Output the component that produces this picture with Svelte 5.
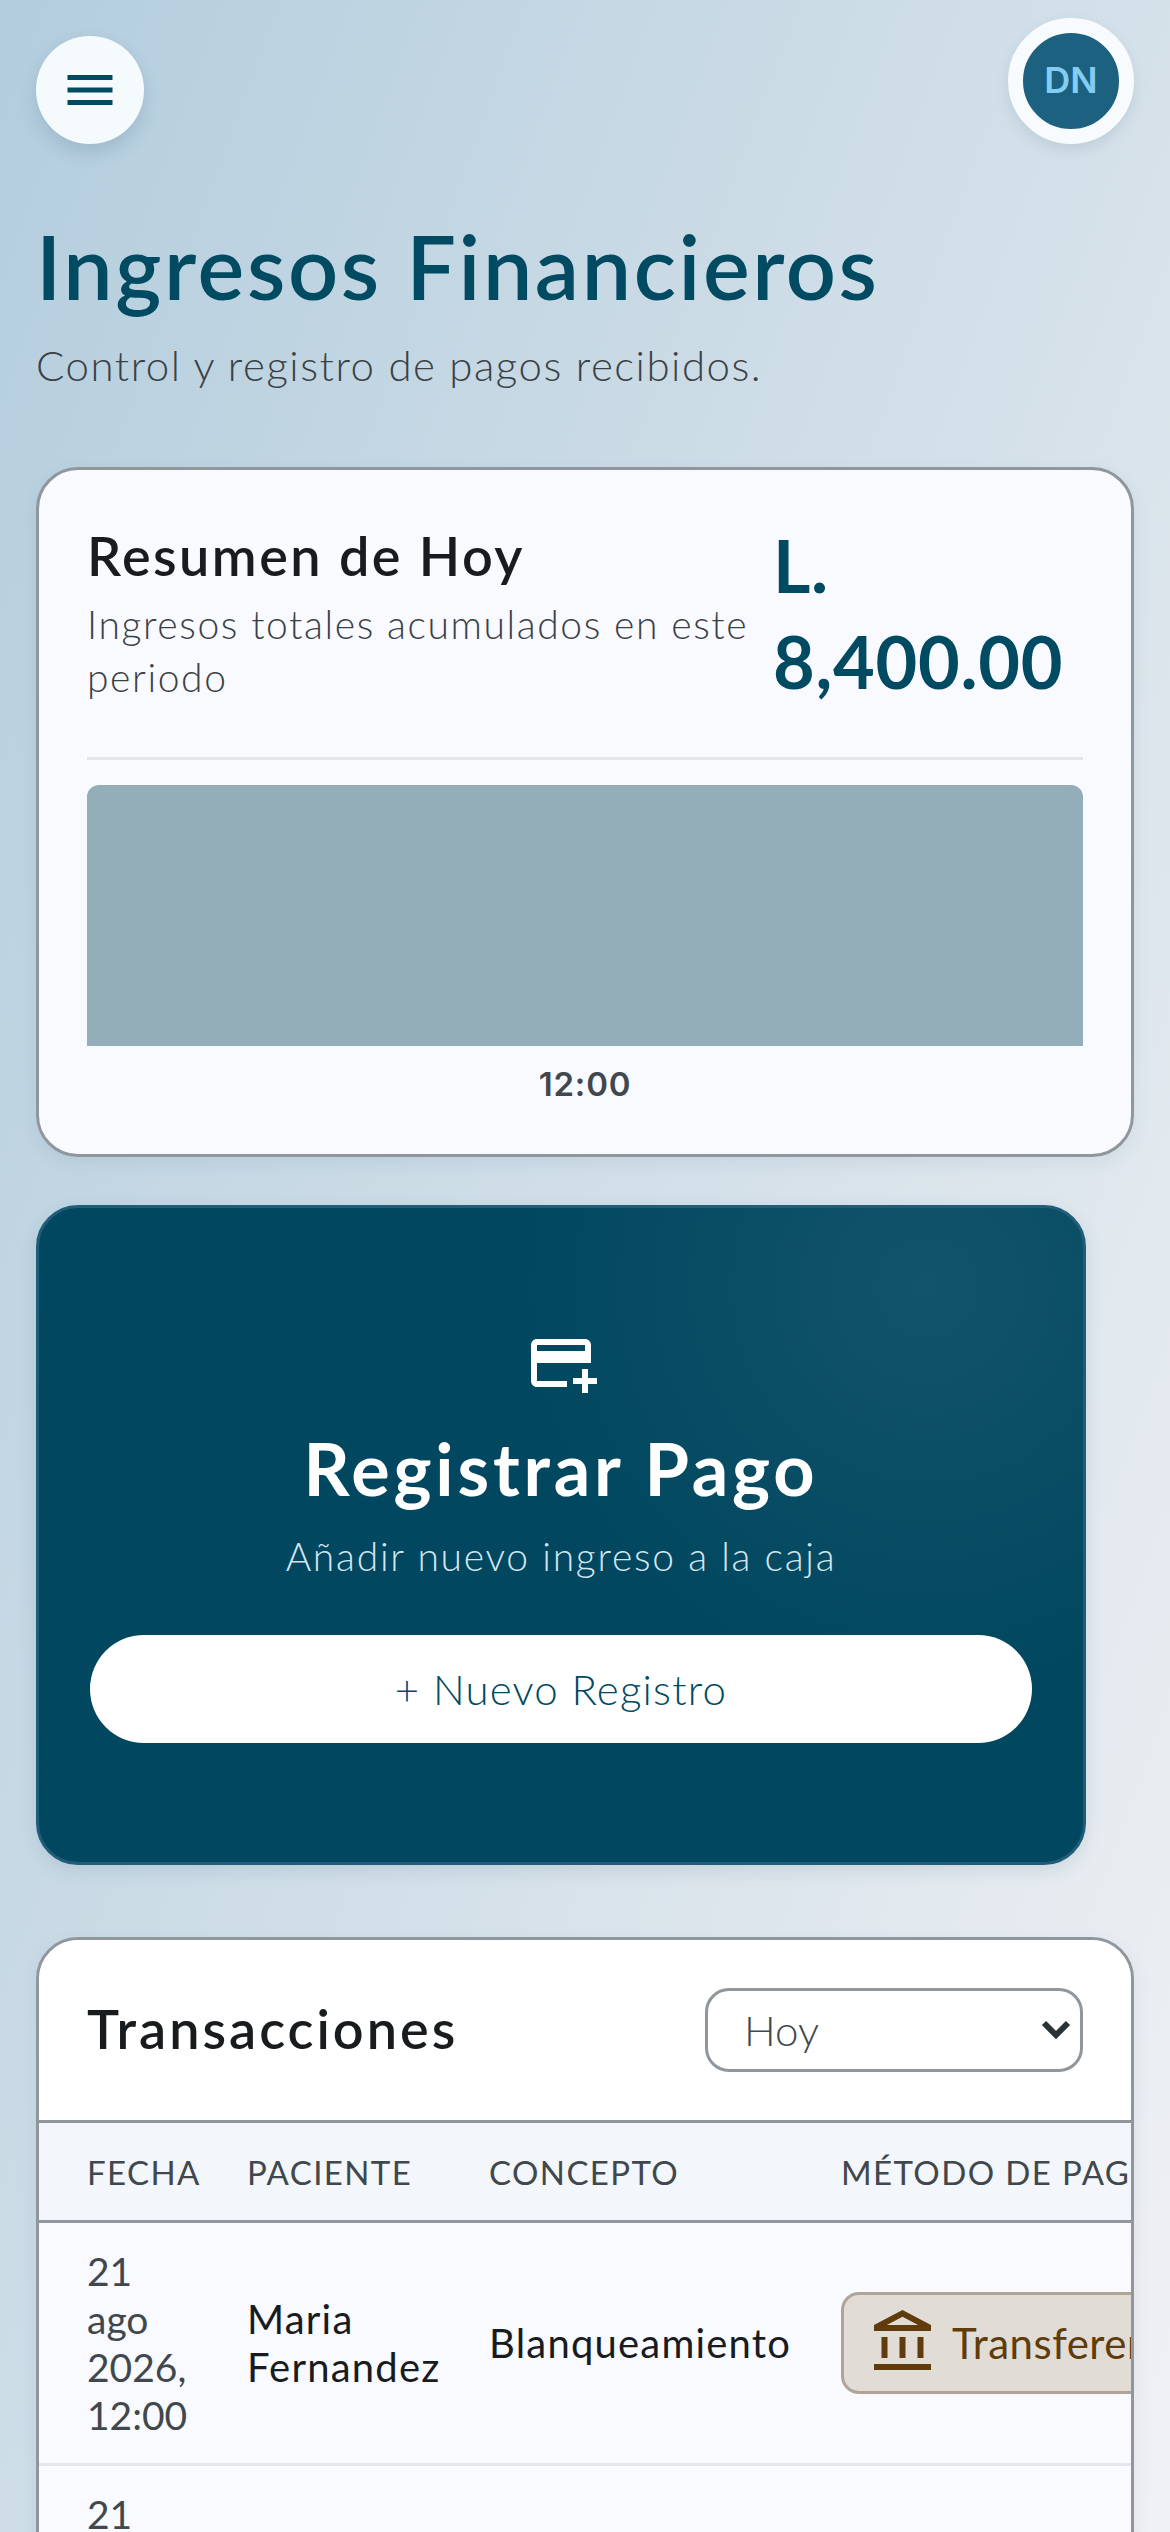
<script>
  const bank = "M6.5 10h-2v7h2v-7zm6 0h-2v7h2v-7zm8.5 9H2v2h19v-2zm-2.5-9h-2v7h2v-7zm-7-6.74L16.71 6H6.29l5.21-2.74m0-2.26L2 6v2h19V6l-9.5-5z";
</script>

<div class="page">
  <header class="top">
    <button class="menu" aria-label="Menú">
      <svg viewBox="0 0 24 24" width="60" height="60"><path d="M3 18h18v-2H3v2zm0-5h18v-2H3v2zm0-7v2h18V6H3z" /></svg>
    </button>
    <div class="avatar">DN</div>
  </header>

  <div class="head">
    <h1>Ingresos Financieros</h1>
    <p>Control y registro de pagos recibidos.</p>
  </div>

  <section class="card summary">
    <div class="sumtop">
      <div class="sumtext">
        <h2>Resumen de Hoy</h2>
        <p>Ingresos totales acumulados en este periodo</p>
      </div>
      <div class="amount">L. 8,400.00</div>
    </div>
    <div class="chart"><div class="bar"></div><div class="tick">12:00</div></div>
  </section>

  <section class="cta">
    <svg class="cardplus" viewBox="0 0 24 24" width="72" height="72"><path d="M20 4H4c-1.11 0-1.99.89-1.99 2L2 18c0 1.11.89 2 2 2h10v-2H4v-6h18V6c0-1.11-.89-2-2-2zm0 4H4V6h16v2zm4 9v2h-3v3h-2v-3h-3v-2h3v-3h2v3h3z" /></svg>
    <h2>Registrar Pago</h2>
    <p>Añadir nuevo ingreso a la caja</p>
    <button class="new">+ Nuevo Registro</button>
  </section>

  <section class="card tx">
    <div class="txhead">
      <h2>Transacciones</h2>
      <div class="selwrap">
        <select><option>Hoy</option><option>Semana</option><option>Mes</option></select>
        <svg viewBox="0 0 30 20" width="30" height="20"><path d="M3 3l12 12L27 3" /></svg>
      </div>
    </div>
    <table>
      <colgroup><col class="c1" /><col class="c2" /><col class="c3" /><col class="c4" /></colgroup>
      <thead>
        <tr><th>Fecha</th><th>Paciente</th><th>Concepto</th><th>Método de pago</th></tr>
      </thead>
      <tbody>
        <tr>
          <td class="date">21 ago 2026, 12:00</td>
          <td>Maria Fernandez</td>
          <td>Blanqueamiento</td>
          <td>
            <span class="badge">
              <svg viewBox="0 0 24 24" width="72" height="72"><path d={bank} /></svg>
              Transferencia
            </span>
          </td>
        </tr>
        <tr>
          <td class="date">21 ago 2026, 12:00</td>
          <td></td><td></td><td></td>
        </tr>
      </tbody>
    </table>
  </section>
</div>

<style>
  :global(body) {
    margin: 0;
    font-family: "Lato", "Noto Sans", sans-serif;
  }
  .page {
    box-sizing: border-box;
    height: 2532px;
    overflow: hidden;
    padding: 18px 36px 0;
    background: linear-gradient(110deg, #b3cddd 0%, #f0f1f4 100%);
  }
  .top {
    display: flex;
    justify-content: space-between;
    align-items: flex-end;
  }
  .menu {
    width: 108px;
    height: 108px;
    border: 0;
    padding: 0;
    border-radius: 50%;
    background: #f5fafd;
    display: flex;
    align-items: center;
    justify-content: center;
    box-shadow: 0 9px 18px rgba(40, 80, 110, 0.16);
  }
  .menu svg { fill: #004a62; }
  .avatar {
    box-sizing: border-box;
    width: 126px;
    height: 126px;
    border: 15px solid #f7fbfd;
    border-radius: 50%;
    background: #1c6280;
    color: #84cdf0;
    font: 600 36px "Inter", sans-serif;
    display: flex;
    align-items: center;
    justify-content: center;
    padding-bottom: 2px;
    box-shadow: 0 6px 14px rgba(40, 80, 110, 0.12);
  }
  .head { margin-top: 67px; }
  h1 {
    margin: 0;
    font-size: 88px;
    line-height: 110px;
    font-weight: 600;
    color: #004a62;
    letter-spacing: 2.6px;
  }
  .head p {
    margin: 17px 0 0;
    font-size: 42px;
    line-height: 54px;
    font-weight: 300;
    color: #3a4145;
    letter-spacing: 1.5px;
  }
  .card {
    border: 3px solid #8f979d;
    border-radius: 42px;
    background: #f8faff;
    box-shadow: 0 6px 18px rgba(40, 80, 110, 0.08);
  }
  .summary {
    box-sizing: border-box;
    height: 690px;
    margin-top: 75px;
    padding: 45px 48px 0;
  }
  .sumtop {
    display: flex;
    gap: 12px;
    height: 245px;
    box-sizing: border-box;
    border-bottom: 3px solid #e3e6ea;
  }
  .sumtext { flex: 1; min-width: 0; padding-top: 8px; }
  .sumtext h2 {
    margin: 0;
    font-size: 54px;
    line-height: 66px;
    font-weight: 600;
    color: #191c1e;
    letter-spacing: 2.45px;
  }
  .sumtext p {
    margin: 9px 0 0;
    font-size: 39px;
    line-height: 53px;
    font-weight: 300;
    color: #3a4145;
    letter-spacing: 1.6px;
  }
  .amount {
    width: 310px;
    font-size: 72px;
    line-height: 96px;
    font-weight: 700;
    color: #004a62;
    margin-top: 2px;
    letter-spacing: 0.7px;
  }
  .chart { margin-top: 25px; text-align: center; }
  .bar {
    height: 261px;
    background: #93aeb9;
    border-radius: 12px 12px 0 0;
  }
  .tick {
    margin-top: 18px;
    font: 600 33px/40px "Inter", sans-serif;
    color: #41484d;
    letter-spacing: 0.8px;
  }
  .cta {
    box-sizing: border-box;
    width: 1050px;
    height: 660px;
    margin-top: 48px;
    padding: 119px 51px 0;
    border: 3px solid #1f5d78;
    border-radius: 42px;
    text-align: center;
    background:
      radial-gradient(circle 420px at 85% 12%, rgba(255, 255, 255, 0.07), rgba(255, 255, 255, 0) 100%),
      #00475f;
    box-shadow: 0 6px 18px rgba(40, 80, 110, 0.12);
    color: #fff;
  }
  .cardplus { display: block; margin: 0 auto; fill: #fff; }
  .cta h2 {
    margin: 24px 0 0;
    font-size: 72px;
    line-height: 90px;
    font-weight: 700;
    letter-spacing: 3.8px;
  }
  .cta p {
    margin: 17px 0 0;
    font-size: 39px;
    line-height: 52px;
    font-weight: 300;
    color: #d3e6ef;
    letter-spacing: 1.75px;
  }
  .new {
    display: block;
    width: 100%;
    height: 108px;
    margin-top: 53px;
    border: 0;
    border-radius: 54px;
    background: #fff;
    color: #004a62;
    font: 300 42px "Lato", sans-serif;
    letter-spacing: 1.2px;
  }
  .tx {
    box-sizing: border-box;
    height: 900px;
    margin-top: 72px;
    overflow: hidden;
    background: #f8faff;
  }
  .txhead {
    box-sizing: border-box;
    height: 180px;
    padding: 0 48px;
    display: flex;
    align-items: center;
    justify-content: space-between;
    background: #fff;
  }
  .txhead h2 {
    margin: 0 0 3px;
    font-size: 54px;
    font-weight: 600;
    color: #191c1e;
    letter-spacing: 3px;
  }
  .selwrap { position: relative; width: 378px; height: 84px; }
  select {
    appearance: none;
    box-sizing: border-box;
    width: 100%;
    height: 100%;
    padding: 0 36px;
    border: 3px solid #8f979d;
    border-radius: 24px;
    background: #fff;
    color: #41484d;
    font: 300 42px "Lato", sans-serif;
  }
  .selwrap svg {
    position: absolute;
    right: 12px;
    top: 32px;
    fill: none;
    stroke: #2b3236;
    stroke-width: 6;
    pointer-events: none;
  }
  table {
    width: 1236px;
    table-layout: fixed;
    border-collapse: collapse;
    color: #191c1e;
    font-size: 40px;
    line-height: 48px;
    letter-spacing: 1.2px;
  }
  .c1 { width: 184px; }
  .c2 { width: 242px; }
  .c3 { width: 352px; }
  .c4 { width: 458px; }
  th, td { padding: 24px 24px; text-align: left; vertical-align: middle; }
  th:first-child, td:first-child { padding-left: 48px; }
  th {
    height: 100px;
    box-sizing: border-box;
    padding-top: 0;
    padding-bottom: 0;
    background: #f3f6fa;
    border-top: 3px solid #8f979d;
    border-bottom: 3px solid #8f979d;
    text-transform: uppercase;
    font-size: 33px;
    font-weight: 400;
    letter-spacing: 1.4px;
    color: #41484d;
    white-space: nowrap;
  }
  tbody tr { border-bottom: 3px solid #e3e6ea; }
  .date { color: #41484d; letter-spacing: 0; font-weight: 400; font-size: 39px; }
  .badge {
    box-sizing: border-box;
    display: inline-flex;
    align-items: center;
    gap: 12px;
    height: 102px;
    padding: 0 24px;
    border: 3px solid #b0a496;
    border-radius: 18px;
    background: #e1dcd6;
    color: #603b0b;
    white-space: nowrap;
    font-size: 42px;
    letter-spacing: 0.5px;
  }
  .badge svg { fill: #603b0b; flex: none; }
</style>
